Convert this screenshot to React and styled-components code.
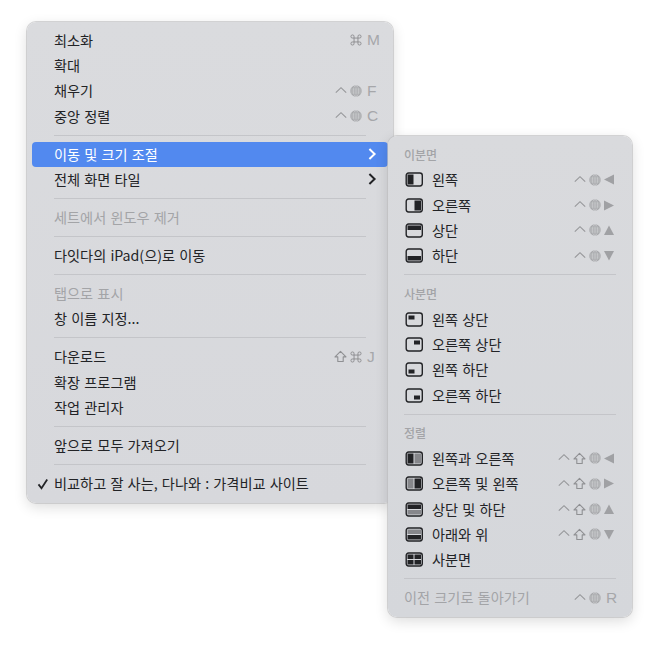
import React from "react";
import styled, { createGlobalStyle } from "styled-components";

const GlobalStyle = createGlobalStyle`
  html, body {
    margin: 0;
    padding: 0;
    background: #fff;
  }
`;

const Page = styled.div`
  position: relative;
  width: 658px;
  height: 648px;
  padding: 22px 0 0 27px;
  box-sizing: border-box;
  overflow: hidden;
  font-family: "Noto Sans CJK KR", "Noto Sans", sans-serif;
`;

const Panel = styled.div`
  width: ${({ $w }) => $w}px;
  height: 481px;
  box-sizing: border-box;
  padding: 5.5px 0 0;
  border-radius: 9px;
  background: linear-gradient(180deg, #dadbde 0%, #d7d8dc 100%);
  box-shadow: 0 0 0 1px rgba(190, 190, 192, 0.65), 0 4px 14px rgba(0, 0, 0, 0.14);
`;

const SubPanel = styled(Panel)`
  position: absolute;
  left: 388px;
  top: 136px;
  padding-top: 5.8px;
  background: linear-gradient(180deg, #d9dadd 0%, #d5d7db 100%);
`;

const Row = styled.div`
  display: flex;
  align-items: center;
  height: 25.33px;
  margin: 0 ${({ $inset }) => $inset}px;
  padding: 0 ${({ $pr }) => $pr}px 0 ${({ $pl }) => $pl}px;
  border-radius: 4px;
  font-size: 14.2px;
  word-spacing: 1px;
  white-space: nowrap;
  color: ${({ $off, $active }) => ($active ? "#fff" : $off ? "#a3a4a7" : "#222326")};
  background: ${({ $active }) => ($active ? "#5289ef" : "transparent")};
`;

const Label = styled.span`
  flex: 1;
  margin-bottom: 1px;
`;

const Heading = styled.div`
  height: 25.33px;
  line-height: 25px;
  padding-left: 16px;
  font-size: 12px;
  font-weight: 500;
  color: #a3a4a7;
`;

const Rule = styled.div`
  height: 1px;
  margin: 5.85px ${({ $side }) => $side}px;
  background: #c4c5c9;
`;

const Keys = styled.span`
  display: flex;
  align-items: center;
  gap: 3px;
`;

const KeySlot = styled.span`
  display: flex;
  align-items: center;
  width: 14px;
  padding-left: ${({ $letter }) => ($letter ? 2 : 0)}px;
  box-sizing: border-box;
  color: #a6a7aa;
  font-family: "Liberation Sans", sans-serif;
  font-size: 15.5px;
  line-height: 16px;
`;

const CheckSlot = styled.span`
  position: absolute;
  left: 37px;
  display: flex;
`;

const ChevronSlot = styled.span`
  display: flex;
  margin-right: 2px;
`;

const WinIcon = styled.svg`
  width: 20px;
  height: 15px;
  margin-right: 8px;
  flex: none;
`;

const frame = { fill: "none", stroke: "#222326", strokeWidth: 1.4 };

const Win = ({ fills = [], soft = [] }) => (
  <WinIcon viewBox="0 0 20 15">
    <rect x="2.2" y="1" width="16.1" height="13" rx="2.4" {...frame} />
    {soft.map((r, i) => (
      <rect key={i} x={r[0]} y={r[1]} width={r[2]} height={r[3]} fill="#86878b" />
    ))}
    {fills.map((r, i) => (
      <rect key={i} x={r[0]} y={r[1]} width={r[2]} height={r[3]} fill="#222326" />
    ))}
  </WinIcon>
);

const Ctrl = () => (
  <svg width="12" height="12" viewBox="0 0 12 12">
    <path d="M.8 7.6 6 2.7l5.2 4.9" fill="none" stroke="#959699" strokeWidth="1.1" />
  </svg>
);

const Globe = () => (
  <svg width="12" height="12" viewBox="0 0 13 13">
    <circle cx="6.5" cy="6.5" r="6.2" fill="#a6a7aa" />
    <g fill="none" stroke="#d8d9dc" strokeWidth="0.55">
      <ellipse cx="6.5" cy="6.5" rx="2.9" ry="6" />
      <path d="M6.5.5v12M1 4.4h11M.5 6.5h12M1 8.6h11" />
    </g>
  </svg>
);

const Shift = () => (
  <svg width="13" height="13" viewBox="0 0 13 13">
    <path d="M6.5 1.3 12 6.9H9.2v4.6H3.8V6.9H1z" fill="none" stroke="#8f9093" strokeWidth="1.1" strokeLinejoin="round" />
  </svg>
);

const Cmd = () => (
  <svg width="12" height="12" viewBox="0 0 13 13">
    <path
      d="M4.4 4.4h4.2v4.2H4.4zM4.4 4.4H3a1.7 1.7 0 1 1 1.4-1.4zM8.6 4.4V3A1.7 1.7 0 1 1 10 4.4zM8.6 8.6H10A1.7 1.7 0 1 1 8.6 10zM4.4 8.6V10A1.7 1.7 0 1 1 3 8.6z"
      fill="none"
      stroke="#8f9093"
      strokeWidth="1.05"
    />
  </svg>
);

const arrows = {
  left: "M0 5.5 10 .5v10z",
  right: "M10 5.5 0 .5v10z",
  up: "M5 .5 10 10H0z",
  down: "M5 10.5 10 1H0z",
};

const Arrow = ({ dir }) => (
  <svg width="10" height="11" viewBox="0 0 10 11">
    <path d={arrows[dir]} fill="#a0a1a4" />
  </svg>
);

const Chevron = ({ light }) => (
  <svg width="9" height="12" viewBox="0 0 9 12">
    <path d="M1.4 1 6.6 6l-5.2 5" fill="none" stroke={light ? "#fff" : "#222326"} strokeWidth="2" />
  </svg>
);

const Check = () => (
  <svg width="12" height="12" viewBox="0 0 12 12">
    <path d="M1.5 6.4 4.5 10.3 10.2 1.6" fill="none" stroke="#222326" strokeWidth="1.8" />
  </svg>
);

const MainRow = ({ children, active, off, check, keys, sub }) => (
  <Row $inset={5} $pl={22} $pr={9} $active={active} $off={off}>
    {check && (
      <CheckSlot>
        <Check />
      </CheckSlot>
    )}
    <Label>{children}</Label>
    {keys && <Keys>{keys}</Keys>}
    {sub && (
      <ChevronSlot>
        <Chevron light={active} />
      </ChevronSlot>
    )}
  </Row>
);

const SubRow = ({ children, win, keys, off }) => (
  <Row $inset={0} $pl={16} $pr={14} $off={off}>
    {win && <Win {...win} />}
    <Label>{children}</Label>
    {keys && <Keys>{keys}</Keys>}
  </Row>
);

const base = (dir) => (
  <>
    <Ctrl />
    <Globe />
    <KeySlot>
      <Arrow dir={dir} />
    </KeySlot>
  </>
);

const shifted = (dir) => (
  <>
    <Ctrl />
    <Shift />
    <Globe />
    <KeySlot>
      <Arrow dir={dir} />
    </KeySlot>
  </>
);

const letterKey = (ch) => (
  <>
    <Ctrl />
    <Globe />
    <KeySlot $letter>{ch}</KeySlot>
  </>
);

export default function App() {
  return (
    <Page>
      <GlobalStyle />
      <Panel $w={366}>
        <MainRow keys={<><Cmd /><KeySlot $letter>M</KeySlot></>}>최소화</MainRow>
        <MainRow>확대</MainRow>
        <MainRow keys={letterKey("F")}>채우기</MainRow>
        <MainRow keys={letterKey("C")}>중앙 정렬</MainRow>
        <Rule $side={27} />
        <MainRow active sub>이동 및 크기 조절</MainRow>
        <MainRow sub>전체 화면 타일</MainRow>
        <Rule $side={27} />
        <MainRow off>세트에서 윈도우 제거</MainRow>
        <Rule $side={27} />
        <MainRow>다잇다의 iPad(으)로 이동</MainRow>
        <Rule $side={27} />
        <MainRow off>탭으로 표시</MainRow>
        <MainRow>창 이름 지정...</MainRow>
        <Rule $side={27} />
        <MainRow keys={<><Shift /><Cmd /><KeySlot $letter>J</KeySlot></>}>다운로드</MainRow>
        <MainRow>확장 프로그램</MainRow>
        <MainRow>작업 관리자</MainRow>
        <Rule $side={27} />
        <MainRow>앞으로 모두 가져오기</MainRow>
        <Rule $side={27} />
        <MainRow check>비교하고 잘 사는, 다나와 : 가격비교 사이트</MainRow>
      </Panel>
      <SubPanel $w={244}>
        <Heading>이분면</Heading>
        <SubRow win={{ fills: [[3.5, 2.5, 6, 10]] }} keys={base("left")}>왼쪽</SubRow>
        <SubRow win={{ fills: [[10.5, 2.5, 6.5, 10]] }} keys={base("right")}>오른쪽</SubRow>
        <SubRow win={{ fills: [[3.5, 2.5, 13.5, 4.5]] }} keys={base("up")}>상단</SubRow>
        <SubRow win={{ fills: [[3.5, 8, 13.5, 4.5]] }} keys={base("down")}>하단</SubRow>
        <Rule $side={16} />
        <Heading>사분면</Heading>
        <SubRow win={{ fills: [[4.5, 3.5, 6, 4]] }}>왼쪽 상단</SubRow>
        <SubRow win={{ fills: [[10, 3.5, 6, 4]] }}>오른쪽 상단</SubRow>
        <SubRow win={{ fills: [[4.5, 7.5, 6, 4]] }}>왼쪽 하단</SubRow>
        <SubRow win={{ fills: [[10, 7.5, 6, 4]] }}>오른쪽 하단</SubRow>
        <Rule $side={16} />
        <Heading>정렬</Heading>
        <SubRow win={{ fills: [[3.5, 2.5, 6, 10]], soft: [[10.5, 2.5, 6.5, 10]] }} keys={shifted("left")}>왼쪽과 오른쪽</SubRow>
        <SubRow win={{ fills: [[10.5, 2.5, 6.5, 10]], soft: [[3.5, 2.5, 6, 10]] }} keys={shifted("right")}>오른쪽 및 왼쪽</SubRow>
        <SubRow win={{ fills: [[3.5, 2.5, 13.5, 4.5]], soft: [[3.5, 8, 13.5, 4.5]] }} keys={shifted("up")}>상단 및 하단</SubRow>
        <SubRow win={{ fills: [[3.5, 8, 13.5, 4.5]], soft: [[3.5, 2.5, 13.5, 4.5]] }} keys={shifted("down")}>아래와 위</SubRow>
        <SubRow win={{ fills: [[3.5, 2.5, 6, 4.5], [10.5, 2.5, 6.5, 4.5], [3.5, 8, 6, 4.5], [10.5, 8, 6.5, 4.5]] }}>사분면</SubRow>
        <Rule $side={16} />
        <SubRow off keys={letterKey("R")}>이전 크기로 돌아가기</SubRow>
      </SubPanel>
    </Page>
  );
}
